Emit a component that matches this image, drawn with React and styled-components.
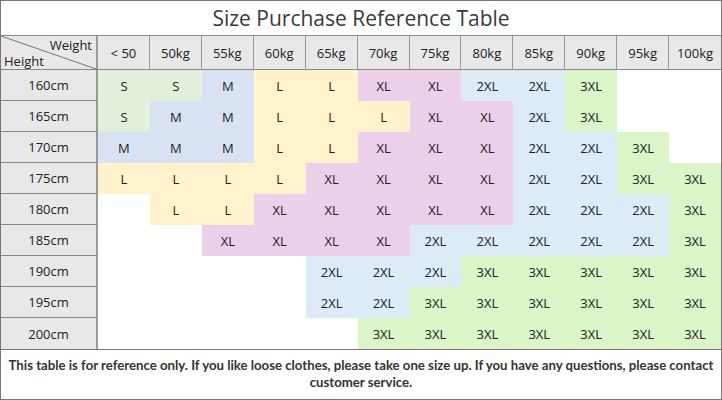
import React from "react";
import styled, { createGlobalStyle } from "styled-components";

const Global = createGlobalStyle`
  html, body { margin: 0; padding: 0; background: #fff; }
  body { font-family: "Open Sans", "Noto Sans", sans-serif; color: #222; }
`;

const weights = ["< 50", "50kg", "55kg", "60kg", "65kg", "70kg", "75kg", "80kg", "85kg", "90kg", "95kg", "100kg"];

const rows = [
  ["160cm", ["S", "S", "M", "L", "L", "XL", "XL", "2XL", "2XL", "3XL", "", ""]],
  ["165cm", ["S", "M", "M", "L", "L", "L", "XL", "XL", "2XL", "3XL", "", ""]],
  ["170cm", ["M", "M", "M", "L", "L", "XL", "XL", "XL", "2XL", "2XL", "3XL", ""]],
  ["175cm", ["L", "L", "L", "L", "XL", "XL", "XL", "XL", "2XL", "2XL", "3XL", "3XL"]],
  ["180cm", ["", "L", "L", "XL", "XL", "XL", "XL", "XL", "2XL", "2XL", "2XL", "3XL"]],
  ["185cm", ["", "", "XL", "XL", "XL", "XL", "2XL", "2XL", "2XL", "2XL", "2XL", "3XL"]],
  ["190cm", ["", "", "", "", "2XL", "2XL", "2XL", "3XL", "3XL", "3XL", "3XL", "3XL"]],
  ["195cm", ["", "", "", "", "2XL", "2XL", "3XL", "3XL", "3XL", "3XL", "3XL", "3XL"]],
  ["200cm", ["", "", "", "", "", "3XL", "3XL", "3XL", "3XL", "3XL", "3XL", "3XL"]],
];

const sizeColors = {
  S: "#e2efda",
  M: "#d9e2f3",
  L: "#fff2cc",
  XL: "#eccfe9",
  "2XL": "#ddebf7",
  "3XL": "#daf5c7",
  "": "#ffffff",
};

const Sheet = styled.div`
  box-sizing: border-box;
  width: 722px;
  height: 400px;
  border: 1px solid #777;
  display: flex;
  flex-direction: column;
  overflow: hidden;
`;

const Title = styled.div`
  box-sizing: border-box;
  height: 35px;
  display: flex;
  align-items: center;
  justify-content: center;
  font-size: 21px;
  color: #3a3a3a;
  border-bottom: 1px solid #888;
`;

const Grid = styled.div`
  display: grid;
  grid-template-columns: 97px repeat(12, 1fr);
  grid-template-rows: 34px repeat(9, 31px);
`;

const HeadCell = styled.div`
  box-sizing: border-box;
  background: #e8e8e8;
  border-right: ${(p) => (p.$last ? "0" : "1px solid #999")};
  border-bottom: 1px solid #888;
  display: flex;
  align-items: center;
  justify-content: center;
  font-size: 13px;
  color: #222;
`;

const Corner = styled.div`
  position: relative;
  box-sizing: border-box;
  background: #e8e8e8;
  border-right: 2px solid #999;
  border-bottom: 1px solid #888;
  display: flex;
  flex-direction: column;
  justify-content: space-between;
  padding: 1px 4px 1px 3px;
  font-size: 13px;
  line-height: 16px;
`;

const CornerLabel = styled.span`
  position: relative;
  align-self: ${(p) => (p.$end ? "flex-end" : "flex-start")};
`;

const Diagonal = styled.svg`
  position: absolute;
  left: 0;
  top: 0;
  width: 100%;
  height: 100%;
`;

const RowHead = styled.div`
  box-sizing: border-box;
  background: #e8e8e8;
  border-right: 2px solid #999;
  border-bottom: ${(p) => (p.$last ? "0" : "1px solid #888")};
  display: flex;
  align-items: center;
  justify-content: center;
  font-size: 13px;
  color: #222;
`;

const SizeCell = styled.div`
  background: ${(p) => sizeColors[p.$size]};
  display: flex;
  align-items: center;
  justify-content: center;
  font-size: 13px;
  color: #222;
`;

const Footer = styled.div`
  box-sizing: border-box;
  flex: 1;
  border-top: 1px solid #777;
  display: flex;
  align-items: center;
  justify-content: center;
  text-align: center;
  padding: 0 2px 2px;
  font-family: "Lato", "Open Sans", sans-serif;
  font-size: 13.2px;
  font-weight: 700;
  line-height: 17px;
  color: #333;
  white-space: nowrap;
`;

export default function App() {
  return (
    <>
      <Global />
      <Sheet>
        <Title>Size Purchase Reference Table</Title>
        <Grid>
          <Corner>
            <Diagonal viewBox="0 0 95 33" preserveAspectRatio="none">
              <line x1="0" y1="0" x2="95" y2="33" stroke="#777" strokeWidth="1" />
            </Diagonal>
            <CornerLabel $end>Weight</CornerLabel>
            <CornerLabel>Height</CornerLabel>
          </Corner>
          {weights.map((w, i) => (
            <HeadCell key={w} $last={i === weights.length - 1}>
              {w}
            </HeadCell>
          ))}
          {rows.map(([h, sizes], ri) => (
            <React.Fragment key={h}>
              <RowHead $last={ri === rows.length - 1}>{h}</RowHead>
              {sizes.map((s, ci) => (
                <SizeCell key={ci} $size={s}>
                  {s}
                </SizeCell>
              ))}
            </React.Fragment>
          ))}
        </Grid>
        <Footer>
          <span>
            This table is for reference only. If you like loose clothes, please take one size up. If you have any
            questions, please contact
            <br />
            customer service.
          </span>
        </Footer>
      </Sheet>
    </>
  );
}
